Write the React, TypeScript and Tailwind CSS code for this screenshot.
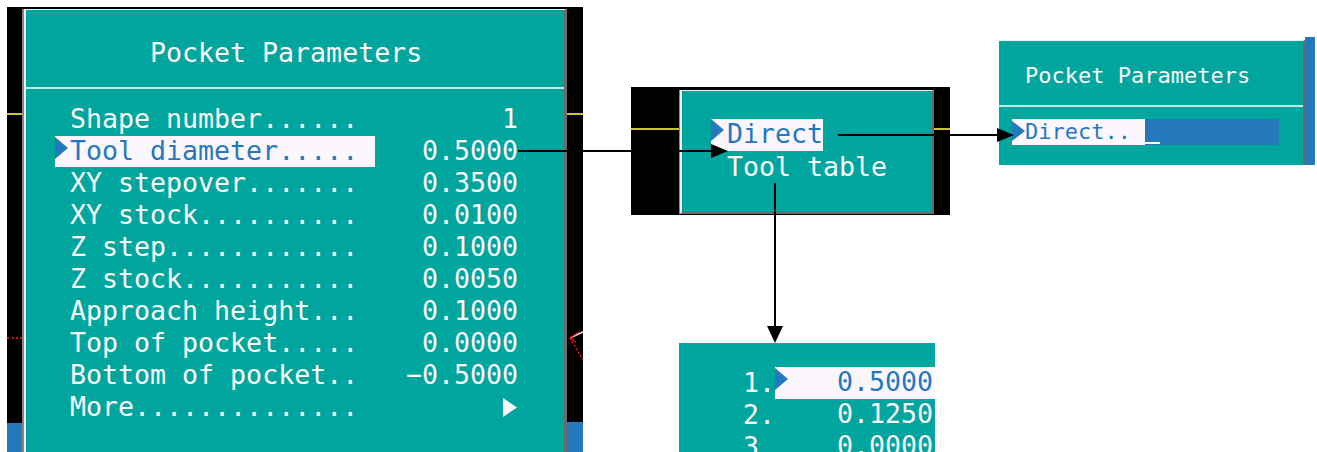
import React from 'react';

const TEAL = 'bg-[#00a69e]';

type Row = { label: string; value?: string; selected?: boolean; more?: boolean };

const rows: Row[] = [
  { label: 'Shape number......', value: '1' },
  { label: 'Tool diameter.....', value: '0.5000', selected: true },
  { label: 'XY stepover.......', value: '0.3500' },
  { label: 'XY stock..........', value: '0.0100' },
  { label: 'Z step............', value: '0.1000' },
  { label: 'Z stock...........', value: '0.0050' },
  { label: 'Approach height...', value: '0.1000' },
  { label: 'Top of pocket.....', value: '0.0000' },
  { label: 'Bottom of pocket..', value: '\u22120.5000' },
  { label: 'More..............', more: true },
];

const toolTable = [
  { n: '1.', v: '0.5000', selected: true },
  { n: '2.', v: '0.1250' },
  { n: '3.', v: '0.0000' },
];

function Pointer({ className = '' }: { className?: string }) {
  return (
    <svg width="13" height="22" viewBox="0 0 13 22" className={className}>
      <polygon points="0,0 13,11 0,22" fill="#2479bd" />
    </svg>
  );
}

function PocketPanel() {
  return (
    <div className="absolute left-[7px] top-[7px] flex h-[445px] w-[576px] bg-black">
      {/* left strip */}
      <div className="flex w-[15px] flex-col">
        <div className="h-[106px]" />
        <div className="h-[2px] bg-[#c8c23a]" />
        <div className="h-[222px]" />
        <div className="border-t-2 border-dotted border-[#d01010]" />
        <div className="flex-1" />
        <div className="h-[29px] bg-[#2479bd]" />
      </div>

      <div className="mt-[2px] flex flex-1 border-l-2 border-[#858585]">
        <div
          className={`flex flex-1 flex-col border-l-2 border-t border-[#f3eef7] border-r-[3px] border-r-[#6a6a6a] ${TEAL}`}
        >
          <div className="h-[77px] pl-[124px] pt-[27px] leading-[32px] text-[#fbf7fd]">
            Pocket Parameters
          </div>
          <div className="h-[2px] bg-[#bfece8]" />
          <div className="mt-[14px] flex flex-col">
            {rows.map((row) => (
              <div key={row.label} className="ml-[29px] flex h-[32px] w-[463px] items-center leading-[32px]">
                <div
                  className={`flex h-[31px] w-[320px] items-start ${
                    row.selected ? 'bg-[#fcf6fd] text-[#2479bd]' : 'text-[#fbf7fd]'
                  }`}
                >
                  <div className="w-[15px] pt-[1px]">{row.selected && <Pointer />}</div>
                  <span className="-mt-[1px]">{row.label}</span>
                </div>
                <div className="flex flex-1 justify-end text-[#fbf7fd]">
                  {row.more ? (
                    <svg width="14" height="19" viewBox="0 0 14 19" className="mr-[1px]">
                      <polygon points="0,0 14,9.5 0,19" fill="#fbf7fd" />
                    </svg>
                  ) : (
                    row.value
                  )}
                </div>
              </div>
            ))}
          </div>
        </div>
      </div>

      {/* right strip */}
      <div className="flex w-[16px] flex-col">
        <div className="h-[106px]" />
        <div className="h-[2px] bg-[#c8c23a]" />
        <div className="h-[213px]" />
        <svg width="16" height="34" viewBox="0 0 16 34">
          <line x1="3" y1="10" x2="16" y2="4" stroke="#f0f0f0" strokeWidth="1.5" />
          <line x1="3" y1="10" x2="12" y2="4" stroke="#e01818" strokeWidth="1.5" />
          <line x1="3" y1="10" x2="16" y2="32" stroke="#e01818" strokeWidth="1.5" strokeDasharray="2 2" />
          <line x1="3" y1="10" x2="9" y2="14" stroke="#e01818" strokeWidth="1.5" />
        </svg>
        <div className="flex-1" />
        <div className="h-[30px] bg-[#2479bd]" />
      </div>
    </div>
  );
}

function SourcePanel() {
  return (
    <div className="absolute left-[631px] top-[87px] flex h-[128px] w-[319px] bg-black">
      <div className="flex w-[48px] flex-col">
        <div className="h-[41px]" />
        <div className="h-[2px] bg-[#c8c23a]" />
      </div>
      <div className="mt-[3px] flex h-[124px] flex-1 border-l border-[#8a8a8a]">
        <div
          className={`flex flex-1 flex-col border-l-2 border-t border-[#f3eef7] border-r-2 border-b-2 border-r-[#6a6a6a] border-b-[#6a6a6a] pl-[29px] pt-[28px] leading-[32px] ${TEAL}`}
        >
          <div className="flex h-[32px] w-[112px] items-start bg-[#fcf6fd] text-[#2479bd]">
            <div className="w-[16px]">
              <Pointer />
            </div>
            <span className="-mt-[1px]">Direct</span>
          </div>
          <div className="pl-[16px] text-[#fbf7fd]">Tool table</div>
        </div>
      </div>
      <div className="flex w-[16px] flex-col">
        <div className="h-[41px]" />
        <div className="h-[2px] bg-[#c8c23a]" />
      </div>
    </div>
  );
}

function DirectEntryPanel() {
  return (
    <div className="absolute left-[999px] top-[37px] flex h-[128px] text-[22px]">
      <div className={`mt-[3px] flex w-[306px] flex-col border-t border-[#e6f4f3] border-r-2 border-r-[#6a6a6a] ${TEAL}`}>
        <div className="pl-[26px] pt-[22px] leading-[26px] text-[#fbf7fd]">Pocket Parameters</div>
        <div className="mt-[16px] h-[2px] bg-[#bfece8]" />
        <div className="mt-[12px] flex h-[26px] pl-[13px] leading-[26px]">
          <div className="flex w-[133px] items-start bg-[#fcf6fd] text-[#2479bd]">
            <svg width="13" height="20" viewBox="0 0 13 20" className="mt-[2px]">
              <polygon points="0,0 13,10 0,20" fill="#2479bd" />
            </svg>
            <span>Direct..</span>
          </div>
          <div className="flex w-[134px] flex-col justify-end bg-[#2479bd] pb-[1px]">
            <div className="h-[2px] w-[15px] bg-[#fbf7fd]" />
          </div>
        </div>
      </div>
      <div className="w-[10px] bg-[#2479bd]" />
    </div>
  );
}

function ToolTablePanel() {
  return (
    <div className={`absolute left-[679px] top-[343px] flex h-[109px] w-[256px] flex-col overflow-hidden pt-[24px] leading-[32px] ${TEAL}`}>
      {toolTable.map((t) => (
        <div key={t.n} className="flex h-[32px] shrink-0 pl-[64px]">
          <div className="w-[32px] text-[#fbf7fd]">{t.n}</div>
          <div
            className={`flex flex-1 items-start justify-between pr-[2px] ${
              t.selected ? 'bg-[#fcf6fd] text-[#2479bd]' : 'text-[#fbf7fd]'
            }`}
          >
            <div className="w-[15px] pt-[1px]">{t.selected && <Pointer />}</div>
            <span className="-mt-[1px]">{t.v}</span>
          </div>
        </div>
      ))}
    </div>
  );
}

function Connectors() {
  return (
    <svg className="pointer-events-none absolute left-0 top-0" width="1317" height="452" viewBox="0 0 1317 452">
      <line x1="518" y1="151" x2="714" y2="151" stroke="#000" strokeWidth="2" />
      <polygon points="711,144 728,151 711,158" fill="#000" />
      <line x1="838" y1="135" x2="1000" y2="135" stroke="#000" strokeWidth="2" />
      <polygon points="997,128 1014,135 997,142" fill="#000" />
      <line x1="775" y1="183" x2="775" y2="328" stroke="#000" strokeWidth="2" />
      <polygon points="767,326 783,326 775,343" fill="#000" />
    </svg>
  );
}

export default function App() {
  return (
    <div className="relative h-[452px] w-[1317px] overflow-hidden bg-white font-['DejaVu_Sans_Mono',monospace] text-[26.6px]">
      <PocketPanel />
      <SourcePanel />
      <DirectEntryPanel />
      <ToolTablePanel />
      <Connectors />
    </div>
  );
}
